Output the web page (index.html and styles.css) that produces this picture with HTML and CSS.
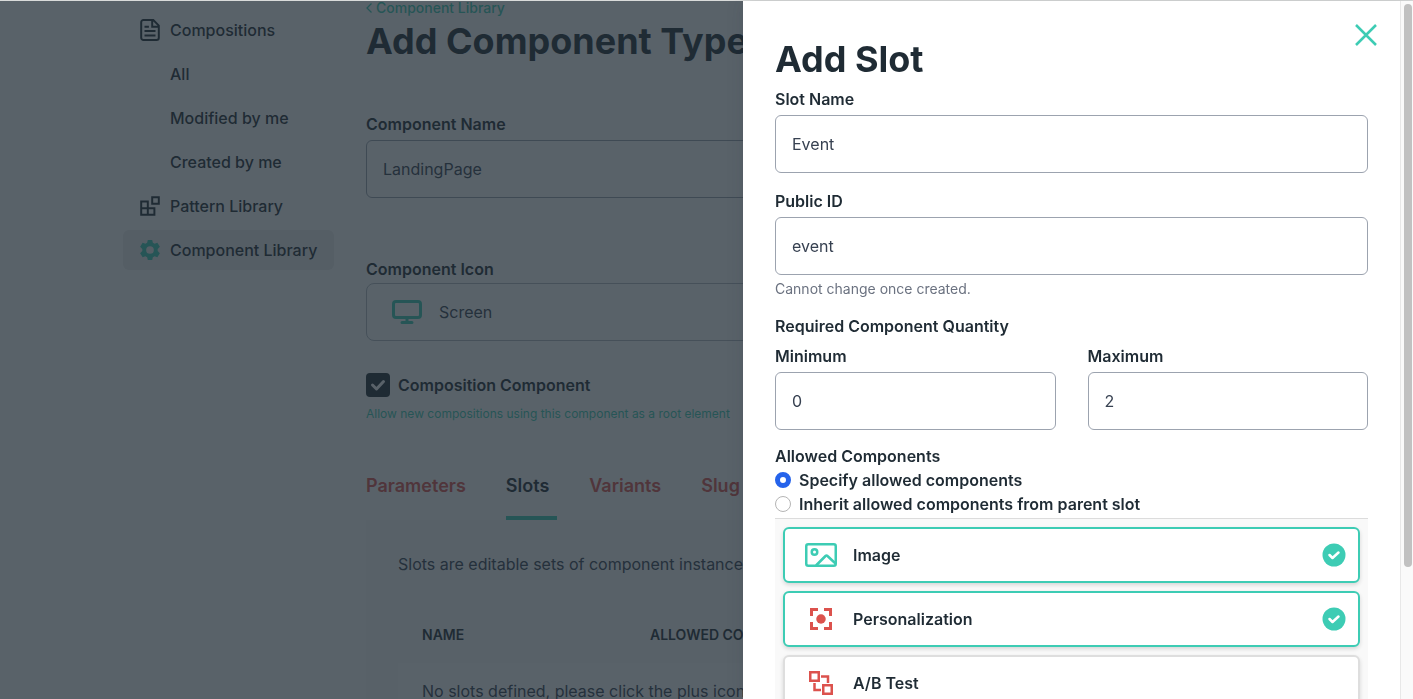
FILE: index.html
```html
<!DOCTYPE html>
<html lang="en">
<head>
<meta charset="utf-8">
<meta name="viewport" content="width=device-width, initial-scale=1">
<title>Add Component Type</title>
<link rel="stylesheet" href="styles.css">
</head>
<body>
<div class="page">
  <nav class="sidebar" aria-label="Library">
    <a class="nav-item" href="#compositions">
      <svg class="nav-icon" viewBox="0 0 20 20" fill="none" stroke="currentColor" stroke-width="1.8"><path d="M4 1h9l5 5v11a2 2 0 0 1-2 2H4a2 2 0 0 1-2-2V3a2 2 0 0 1 2-2zM12 1v6h6M5 7h4M5 11h10M5 15h10"/></svg>
      Compositions
    </a>
    <a class="nav-item nav-sub" href="#all">All</a>
    <a class="nav-item nav-sub" href="#modified">Modified by me</a>
    <a class="nav-item nav-sub" href="#created">Created by me</a>
    <a class="nav-item" href="#patterns">
      <svg class="nav-icon" viewBox="0 0 20 20" fill="none" stroke="currentColor" stroke-width="1.8"><path d="M2 6h6v12H2zM2 12h12v6H2M8 12v6M12 2h6v6h-6z"/></svg>
      Pattern Library
    </a>
    <a class="nav-item nav-active" href="#components" aria-current="page">
      <svg class="nav-icon green" viewBox="0 0 20 20" fill="currentColor" fill-rule="evenodd"><path d="M8 1h4l.6 2.5 1.6.9 2.5-.9 2.3 3.6-2 1.9v2l2 1.9-2.3 3.6-2.5-.9-1.6.9L12 19H8l-.6-2.5-1.6-.9-2.5.9L1 12.900l2-1.900V9L1 7.100l2.300-3.600 2.500.900 1.600-.900zM10 6.500a3.500 3.500 0 1 0 0 7 3.500 3.500 0 0 0 0-7z"/></svg>
      Component Library
    </a>
  </nav>

  <main class="main">
    <a class="back" href="#components">
      <svg class="back-icon" viewBox="0 0 6 10" fill="none" stroke="currentColor" stroke-width="1.3"><path d="M5.500.500 1 5l4.500 4.500"/></svg>
      Component Library
    </a>
    <h1 class="title">Add Component Type</h1>
    <label class="label" for="component-name">Component Name</label>
    <input class="input" id="component-name" type="text" value="LandingPage">
    <span class="label icon-label" id="icon-label">Component Icon</span>
    <button class="icon-picker" type="button" aria-labelledby="icon-label icon-value">
      <svg class="screen-icon" viewBox="0 0 32 24" fill="none" stroke="currentColor" stroke-width="3" stroke-linecap="round"><rect x="2.500" y="1.500" width="27" height="16" rx="2.5"/><path d="M16 18v4M11 22.500h10"/></svg>
      <span id="icon-value">Screen</span>
    </button>
    <label class="check-row">
      <span class="check">
        <input class="check-input" type="checkbox" checked>
        <svg class="check-mark" viewBox="0 0 24 24" fill="none" stroke="currentColor" stroke-width="3" stroke-linecap="round" stroke-linejoin="round"><path d="m6.500 12 4 4 7-7.500"/></svg>
      </span>
      Composition Component
    </label>
    <p class="check-help">Allow new compositions using this component as a root element</p>
    <div class="tabs" role="tablist">
      <button class="tab" type="button" role="tab">Parameters</button>
      <button class="tab tab-active" type="button" role="tab" aria-selected="true">Slots</button>
      <button class="tab" type="button" role="tab">Variants</button>
      <button class="tab" type="button" role="tab">Slug</button>
    </div>
    <section class="panel">
      <p class="panel-text">Slots are editable sets of component instances</p>
      <table class="table">
        <thead><tr><th class="col-name">Name</th><th>Allowed Components</th></tr></thead>
        <tbody><tr><td colspan="2">No slots defined, please click the plus icon to add one.</td></tr></tbody>
      </table>
    </section>
  </main>
</div>

<div class="overlay">
  <section class="drawer" role="dialog" aria-labelledby="drawer-title">
    <form class="form">
      <button class="close" type="button" aria-label="Close">
        <svg class="close-icon" viewBox="0 0 24 24" fill="none" stroke="currentColor" stroke-width="2.500"><path d="m2 2 20 20M22 2 2 22"/></svg>
      </button>
      <h2 class="title drawer-title" id="drawer-title">Add Slot</h2>
      <label class="label" for="slot-name">Slot Name</label>
      <input class="input" id="slot-name" type="text" value="Event">
      <label class="label next" for="public-id">Public ID</label>
      <input class="input" id="public-id" type="text" value="event">
      <p class="help">Cannot change once created.</p>
      <fieldset class="group">
        <legend class="label">Required Component Quantity</legend>
        <div class="pair">
          <div><label class="label" for="min">Minimum</label><input class="input" id="min" type="text" inputmode="numeric" value="0"></div>
          <div><label class="label" for="max">Maximum</label><input class="input" id="max" type="text" inputmode="numeric" value="2"></div>
        </div>
      </fieldset>
      <fieldset class="group group-last">
        <legend class="label legend-tight">Allowed Components</legend>
        <label class="radio-row"><input class="radio" type="radio" name="allowed" checked>Specify allowed components</label>
        <label class="radio-row"><input class="radio" type="radio" name="allowed">Inherit allowed components from parent slot</label>
      </fieldset>
      <div class="cards">
        <button class="card card-on" type="button" aria-pressed="true">
          <svg class="card-icon green" viewBox="0 0 32 24" fill="none" stroke="currentColor" stroke-width="2.500"><rect x="1.250" y="1.250" width="29.500" height="21.500" rx="2"/><circle cx="9.500" cy="9" r="2.750"/><path d="m11 22.500 9.500-9.500c.7-.7 1.300-.7 2 0l8 7.500"/></svg>
          Image
          <svg class="card-check green" viewBox="0 0 24 24" fill="none"><circle cx="12" cy="12" r="11.500" fill="currentColor"/><path d="m7.500 12 3 3 6-5.500" stroke="#fff" stroke-width="2.500" stroke-linecap="round" stroke-linejoin="round"/></svg>
        </button>
        <button class="card card-on" type="button" aria-pressed="true">
          <svg class="card-icon red" viewBox="0 0 32 24" fill="none" stroke="currentColor" stroke-width="3"><path d="M13 2.500H6.500V9M19 2.500h6.500V9M13 21.500H6.500V15M19 21.500h6.500V15"/><circle cx="16" cy="12" r="4.750" fill="currentColor" stroke="none"/></svg>
          Personalization
          <svg class="card-check green" viewBox="0 0 24 24" fill="none"><circle cx="12" cy="12" r="11.500" fill="currentColor"/><path d="m7.500 12 3 3 6-5.500" stroke="#fff" stroke-width="2.500" stroke-linecap="round" stroke-linejoin="round"/></svg>
        </button>
        <button class="card" type="button" aria-pressed="false">
          <svg class="card-icon red" viewBox="0 0 32 24" fill="none" stroke="currentColor" stroke-width="2.500"><path d="M5.250 1.250h8.500v8.500h-8.500zM18.250 14.250h8.500v8.500h-8.500zM16 5.500h7V12M9.500 12v7H16"/></svg>
          A/B Test
        </button>
      </div>
    </form>
    <div class="scrollbar" aria-hidden="true"><div class="scroll-thumb"></div></div>
  </section>
</div>
</body>
</html>
```
FILE: styles.css
```css
* { box-sizing: border-box; }
html, body { height: 100%; }
body {
  margin: 0;
  overflow: hidden;
  font-family: Inter, "Open Sans", sans-serif;
  font-size: 16px;
  line-height: 24px;
  color: #1f2b34;
  background: #fff;
}
button, input { font: inherit; color: inherit; }
button { border: 0; background: none; padding: 0; text-align: left; }
p, h1, h2 { margin: 0; }
a { text-decoration: none; }
.green { color: #3dccb4; }
.red { color: #dc524d; }

/* Page behind the drawer */
.page { display: flex; gap: 32px; padding: 0 123px; height: 100%; overflow: hidden; }
.sidebar { display: flex; flex-direction: column; gap: 4px; flex: 0 0 211px; padding-top: 10px; }
.nav-item {
  display: flex; align-items: center; gap: 9px;
  min-height: 40px; padding: 0 16px;
  border-radius: 6px; color: #1f2b34; font-weight: 500; white-space: nowrap;
}
.nav-icon { flex: none; width: 22px; height: 22px; }
.nav-sub { padding-left: 47px; }
.nav-active { background: #eee; }

.main { flex: 1; min-width: 0; }
.back { display: flex; align-items: center; gap: 4px; height: 16px; font-size: 14px; font-weight: 500; color: #3dccb4; }
.back-icon { width: 6px; height: 10px; }
.title { font-size: 36px; line-height: 40px; font-weight: 700; white-space: nowrap; }
.main .title { margin: 5px 0 51px; }
.label { display: block; margin-bottom: 4px; font-weight: 600; }
.input {
  display: block; width: 100%; height: 58px; padding: 0 16px;
  border: 1px solid #9ca3af; border-radius: 6px; background: #fff; color: #374151;
}
.icon-label { margin: 59px 0 2px; }
.icon-picker {
  display: flex; align-items: center; gap: 16px;
  width: 100%; height: 58px; padding: 0 24px;
  border: 1px solid #b4bac2; border-radius: 8px; color: #374151;
}
.screen-icon { width: 32px; height: 24px; color: #3dccb4; }
.check-row { display: flex; align-items: center; gap: 8px; margin: 32px 0 7px; font-weight: 600; }
.check { display: grid; }
.check-input { grid-area: 1 / 1; appearance: none; width: 24px; height: 24px; margin: 0; border-radius: 4px; background: #1f2b34; }
.check-mark { grid-area: 1 / 1; width: 24px; height: 24px; color: #fff; pointer-events: none; }
.check-help { font-size: 12px; line-height: 20px; color: #3dccb4; white-space: nowrap; }

.tabs { display: flex; gap: 32px; margin-top: 48px; white-space: nowrap; }
.tab { height: 48px; padding: 0 8px 16px 0; font-size: 18px; font-weight: 600; color: #dc524d; border-bottom: 4px solid transparent; }
.tab-active { color: #1f2b34; border-color: #3dccb4; }
.panel { padding: 32px; background: #f9f9f9; }
.panel-text { white-space: nowrap; color: #374151; }
.table { width: 100%; margin-top: 31px; border-collapse: collapse; table-layout: fixed; white-space: nowrap; }
.table th { padding: 16px 24px; font-size: 14px; font-weight: 600; text-align: left; text-transform: uppercase; }
.table .col-name { width: 228px; }
.table td { padding: 16px 24px; background: #fff; color: #374151; }

/* Drawer */
.overlay { position: fixed; inset: 0; display: flex; justify-content: flex-end; background: rgba(31, 43, 52, 0.74); border-top: 1px solid #d9dbda; background-clip: padding-box; }
.drawer { display: flex; width: 670px; max-width: 100%; background: #fff; box-shadow: 0 0 16px rgba(31, 43, 52, 0.15); overflow: hidden; }
.form { position: relative; flex: 1; min-width: 0; padding: 38px 32px 32px; }
.close { position: absolute; top: 22px; right: 22px; }
.close-icon { display: block; width: 24px; height: 24px; color: #3dccb4; }
.drawer-title { margin-bottom: 8px; }
.next { margin-top: 16px; }
.help { margin: 4px 0 15px; font-size: 14px; line-height: 20px; color: #6b7280; }
.group { min-width: 0; margin: 0 0 14px; padding: 0; border: 0; }
.group-last { margin-bottom: 2px; }
.group legend { padding: 0; margin-bottom: 6px; }
.group .legend-tight { margin-bottom: 0; }
.pair { display: grid; grid-template-columns: 1fr 1fr; gap: 32px; }
.radio-row { display: flex; align-items: center; gap: 8px; font-weight: 600; }
.radio { appearance: none; flex: none; width: 16px; height: 16px; margin: 0; border: 1px solid #b5b5b5; border-radius: 50%; background: #fff; }
.radio:checked { border: 5px solid #2563eb; }
.cards { display: flex; flex-direction: column; gap: 8px; padding: 8px; background: #f9f9f9; border-top: 1px solid #dcdcdc; }
.card {
  display: flex; align-items: center; gap: 16px; height: 56px; padding: 0 12px 0 20px;
  border: 2px solid #dedede; border-radius: 6px; background: #fff; font-weight: 600;
  box-shadow: 0 2px 4px rgba(0, 0, 0, 0.14);
}
.card-on { border-color: #3dccb4; }
.card-icon { width: 32px; height: 24px; }
.card-check { width: 24px; height: 24px; margin-left: auto; }
.scrollbar { flex: 0 0 13px; padding: 3px 1px 0 3px; background: #fafafa; border-left: 1px solid #e8e8e8; }
.scroll-thumb { height: 81%; border-radius: 4px; background: #c1c1c1; }
```
